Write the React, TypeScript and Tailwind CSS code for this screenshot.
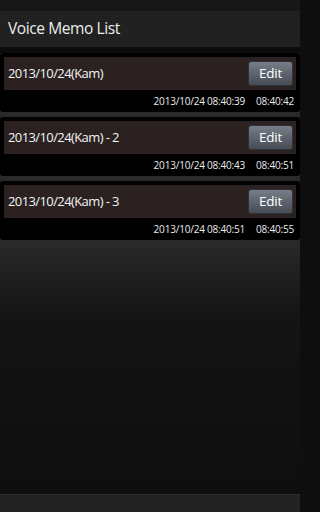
const memos = [
  { name: '2013/10/24(Kam)', start: '2013/10/24 08:40:39', end: '08:40:42' },
  { name: '2013/10/24(Kam) - 2', start: '2013/10/24 08:40:43', end: '08:40:51' },
  { name: '2013/10/24(Kam) - 3', start: '2013/10/24 08:40:51', end: '08:40:55' },
];

export default function App() {
  return (
    <div className="h-[512px] w-full bg-[#0e0e0e]">
      <div
        className="flex h-[512px] w-[300px] flex-col overflow-hidden bg-[#0e0e0e] text-white"
        style={{ fontFamily: '"Open Sans", "Noto Sans", sans-serif' }}
      >
        <div className="h-[11px] bg-[#171717]" />
        <header className="flex h-[36px] items-center bg-[#212121] pl-[8px]">
          <h1 className="text-[15.5px] leading-none tracking-[-0.4px] text-[#ededed]">Voice Memo List</h1>
        </header>
        <div className="h-[6px] bg-[#0c0c0c]" />

        <ul className="flex flex-col gap-[5px] bg-[#2a2a2a]">
          {memos.map((memo) => (
            <li key={memo.name} className="flex h-[59px] flex-col rounded-[3px] bg-black px-[4px] pt-[4px]">
              <div className="flex h-[33px] items-center justify-between bg-[#2b2121] pl-[4px] pr-[3px]">
                <span className="text-[13px] font-medium tracking-[-0.6px] text-[#f4f4f4]">{memo.name}</span>
                <button className="flex h-[25px] w-[45px] items-center justify-center rounded-[3px] border border-[#2e3238] bg-gradient-to-b from-[#777e88] to-[#464c56] text-[13.5px] font-medium tracking-[-0.3px] text-white">
                  Edit
                </button>
              </div>
              <div className="flex flex-1 items-center justify-end gap-[11px] pr-[2px] text-[10px] tracking-[-0.2px] text-[#ececec]">
                <span>{memo.start}</span>
                <span>{memo.end}</span>
              </div>
            </li>
          ))}
        </ul>

        <div className="flex-1 bg-gradient-to-b from-[#2a2a2a] via-[#141414] via-30% to-[#0e0e0e]" />
        <footer className="h-[18px] border-t border-[#2c2c2c] bg-[#222222]" />
      </div>
    </div>
  );
}
